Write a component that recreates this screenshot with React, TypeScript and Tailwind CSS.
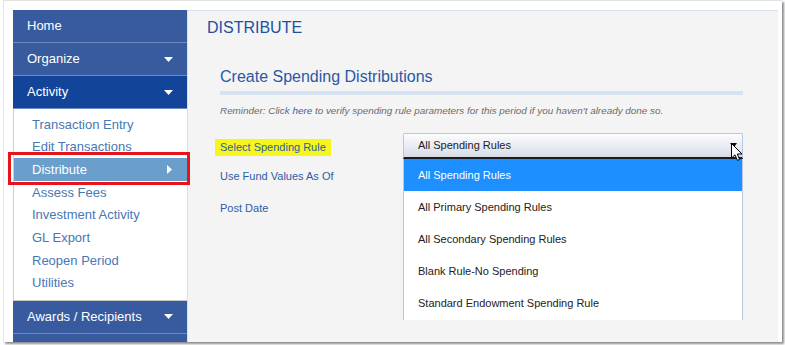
import React from "react";

function CaretDown() {
  return (
    <svg width="9" height="5" viewBox="0 0 9 5" className="block">
      <path d="M0 0 L9 0 L4.5 5 Z" fill="#ffffff" />
    </svg>
  );
}

function CaretRight() {
  return (
    <svg width="5" height="9" viewBox="0 0 5 9" className="block">
      <path d="M0 0 L5 4.5 L0 9 Z" fill="#ffffff" />
    </svg>
  );
}

function TopItem({ label, dark, caret }: { label: string; dark?: boolean; caret?: boolean }) {
  return (
    <div
      className={`h-[33px] shrink-0 flex items-center justify-between pl-[14px] pr-[14px] text-white text-[13px] border-b border-[#6c8bc3] ${
        dark ? "bg-[#12449a]" : "bg-[#375b9e]"
      }`}
    >
      <span>{label}</span>
      {caret && <CaretDown />}
    </div>
  );
}

const subItems = [
  "Transaction Entry",
  "Edit Transactions",
  "Distribute",
  "Assess Fees",
  "Investment Activity",
  "GL Export",
  "Reopen Period",
  "Utilities",
];

const options = [
  "All Spending Rules",
  "All Primary Spending Rules",
  "All Secondary Spending Rules",
  "Blank Rule-No Spending",
  "Standard Endowment Spending Rule",
];

export default function App() {
  return (
    <div className="w-[785px] h-[345px] bg-white overflow-hidden font-['Liberation_Sans',Arial,sans-serif]">
      <div className="ml-[3px] w-[779px] h-[342px] overflow-hidden border-l border-t border-[#e3e3e3] shadow-[2px_2px_2px_rgba(0,0,0,0.45)] pl-[9px] pt-[9px] pr-[4px]">
        <div className="flex h-[332px]">
          {/* Sidebar */}
          <div className="w-[174px] shrink-0 flex flex-col">
            <TopItem label="Home" />
            <TopItem label="Organize" caret />
            <TopItem label="Activity" dark caret />
            <div className="shrink-0 bg-white border-l border-[#d0d0d0] border-b border-b-[#c8c8c8] pt-[4px] pb-[5px]">
              {subItems.map((s) => {
                const active = s === "Distribute";
                return (
                  <div key={s} className="relative h-[22.7px]">
                    {active && (
                      <div className="absolute left-[-6px] right-[-3px] top-[-6px] bottom-[-4px] border-[3px] border-[#e8141b]" />
                    )}
                    <div
                      className={`h-full flex items-center justify-between pl-[18px] pr-[15px] text-[13px] ${
                        active ? "bg-[#6a9ecb] text-white" : "text-[#4777b5]"
                      }`}
                    >
                      <span>{s}</span>
                      {active && <CaretRight />}
                    </div>
                  </div>
                );
              })}
            </div>
            <TopItem label="Awards / Recipients" caret />
            <TopItem label="" />
          </div>

          {/* Main */}
          <div className="flex-1 bg-[#f4f4f4] border-l border-t border-[#d6e0ef] pl-[19px] pt-[8px]">
            <div className="text-[16px] leading-[18px] text-[#2150a2]">DISTRIBUTE</div>
            <div className="ml-[13px] mt-[31px] w-[523px]">
              <div className="text-[16px] leading-[18px] text-[#2a58a6]">Create Spending Distributions</div>
              <div className="mt-[5px] h-[4px] bg-[#d7e2f3]" />
              <div className="mt-[10px] text-[9.9px] leading-[12px] italic text-[#6b6b6b]">
                Reminder: Click <span className="text-[#2f63b8]">here</span> to verify spending rule parameters for this period if you haven't already done so.
              </div>

              <div className="mt-[16px] relative">
                {/* Rows */}
                <div className="flex h-[26px] items-center">
                  <div className="w-[188px] -ml-[5px]">
                    <span className="inline-block bg-[#f6f51e] px-[5px] h-[17px] leading-[17px] text-[11px] text-[#2d5ca6]">
                      Select Spending Rule
                    </span>
                  </div>
                </div>
                <div className="flex h-[35px] items-center text-[11px] text-[#2d5ca6]">
                  Use Fund Values As Of
                </div>
                <div className="flex h-[29px] items-center text-[11px] text-[#2d5ca6]">
                  Post Date
                </div>

                {/* Select + open dropdown (overlay) */}
                <div className="absolute left-[183px] top-0 w-[340px]">
                  <div className="relative h-[26px] rounded-t-[2px] border border-[#b4c8e4] border-b-[2px] border-b-[#1a1a1a] bg-gradient-to-b from-[#fdfdfe] to-[#d6dce8] flex items-center pl-[14px] text-[11px] text-[#222]">
                    All Spending Rules
                    <svg width="7" height="5" viewBox="0 0 7 5" className="absolute right-[5px] top-[9px]">
                      <path d="M0 0 L7 0 L3.5 5 Z" fill="#111" />
                    </svg>
                    <svg width="12" height="19" viewBox="0 0 12 19" className="absolute right-[-1px] top-[9px]">
                      <path
                        d="M0.5 0.5 L0.5 15 L4 11.8 L6.4 17.4 L8.6 16.4 L6.3 11 L11 11 Z"
                        fill="#ffffff"
                        stroke="#000000"
                        strokeWidth="1"
                        strokeLinejoin="round"
                      />
                    </svg>
                  </div>
                  <div className="bg-white border-l border-r border-[#b7c6dc] h-[161px] overflow-hidden">
                    {options.map((o, i) => (
                      <div
                        key={o}
                        className={`h-[32px] flex items-center pl-[14px] text-[11px] ${
                          i === 0 ? "bg-[#1e8fff] text-white" : "text-[#222]"
                        }`}
                      >
                        {o}
                      </div>
                    ))}
                  </div>
                </div>
              </div>
            </div>
          </div>
        </div>
      </div>
    </div>
  );
}
